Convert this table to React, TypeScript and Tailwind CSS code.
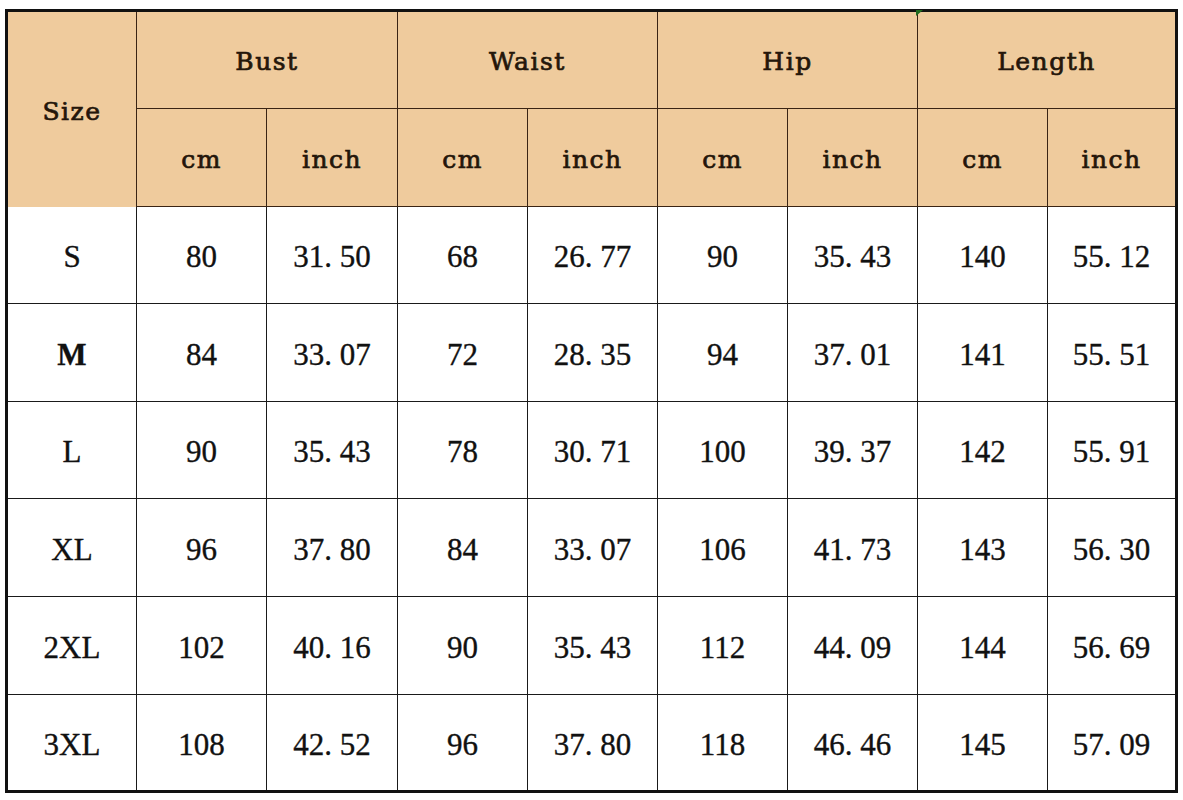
import React from "react";

const rows: string[][] = [
  ["S", "80", "31.50", "68", "26.77", "90", "35.43", "140", "55.12"],
  ["M", "84", "33.07", "72", "28.35", "94", "37.01", "141", "55.51"],
  ["L", "90", "35.43", "78", "30.71", "100", "39.37", "142", "55.91"],
  ["XL", "96", "37.80", "84", "33.07", "106", "41.73", "143", "56.30"],
  ["2XL", "102", "40.16", "90", "35.43", "112", "44.09", "144", "56.69"],
  ["3XL", "108", "42.52", "96", "37.80", "118", "46.46", "145", "57.09"],
];

function Num({ v }: { v: string }) {
  const i = v.indexOf(".");
  if (i < 0) return <>{v}</>;
  return (
    <>
      {v.slice(0, i)}
      <span className="inline-block w-[0.5em] text-left">.</span>
      {v.slice(i + 1)}
    </>
  );
}

const head =
  "flex items-center justify-center bg-[#efcb9d] text-[#24160a] text-[25px] font-normal pt-[4px] [font-family:'DejaVu_Serif',serif] tracking-[1.5px] [-webkit-text-stroke:0.7px_#24160a]";
const body =
  "flex items-center justify-center bg-white text-[#111] text-[31px] pt-[5px] [font-family:'Liberation_Serif',serif] [-webkit-text-stroke:0.35px_#111]";

export default function App() {
  const groups = ["Bust", "Waist", "Hip", "Length"];
  return (
    <div className="w-[1183px] h-[800px] bg-white relative">
      <div className="absolute left-[5px] top-[9px] w-[1173px] h-[784px] border-[3px] border-[#111]">
        <div className="grid grid-cols-[129px_130px_131px_130px_130px_130px_130px_130px_127px] grid-rows-[97px_98px_97px_98px_97px_98px_98px_95px] w-full h-full">
          <div className={`${head} row-span-2 border-r border-[#3a2414]`}>Size</div>
          {groups.map((g, gi) => (
            <div
              key={g}
              className={`${head} col-span-2 border-b border-[#3a2414] ${gi < 3 ? "border-r" : ""}`}
            >
              {g}
            </div>
          ))}
          {groups.map((g, gi) => (
            <React.Fragment key={g + "u"}>
              <div className={`${head} border-r border-b border-[#3a2414]`}>cm</div>
              <div className={`${head} border-b border-[#3a2414] ${gi < 3 ? "border-r" : ""}`}>inch</div>
            </React.Fragment>
          ))}
          {rows.map((r, ri) =>
            r.map((c, ci) => (
              <div
                key={ri + "-" + ci}
                className={`${body} ${ci < 8 ? "border-r" : ""} ${ri < 5 ? "border-b" : ""} border-[#1a1a1a] ${
                  ci === 0 ? "text-[27px]" : ""
                } ${ci === 0 && c === "M" ? "font-bold" : ""}`}
              >
                <Num v={c} />
              </div>
            ))
          )}
        </div>
        <svg className="absolute left-[908px] top-[-2px]" width="8" height="8" viewBox="0 0 8 8">
          <polygon points="0,0 7,0 0,6" fill="#1f6b1f" />
        </svg>
      </div>
    </div>
  );
}
